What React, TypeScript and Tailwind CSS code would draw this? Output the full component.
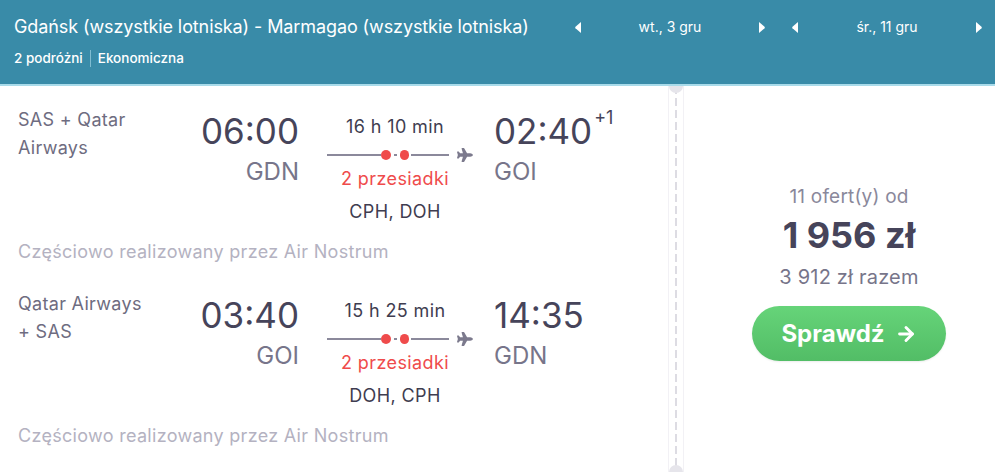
import { ArrowRight } from 'lucide-react'
import { FaPlane } from 'react-icons/fa'

type Leg = {
  airline: string[]
  depTime: string
  depCode: string
  duration: string
  stops: string
  via: string
  arrTime: string
  arrCode: string
  dayShift?: string
}

const legs: Leg[] = [
  {
    airline: ['SAS + Qatar', 'Airways'],
    depTime: '06:00',
    depCode: 'GDN',
    duration: '16 h 10 min',
    stops: '2 przesiadki',
    via: 'CPH, DOH',
    arrTime: '02:40',
    arrCode: 'GOI',
    dayShift: '+1',
  },
  {
    airline: ['Qatar Airways', '+ SAS'],
    depTime: '03:40',
    depCode: 'GOI',
    duration: '15 h 25 min',
    stops: '2 przesiadki',
    via: 'DOH, CPH',
    arrTime: '14:35',
    arrCode: 'GDN',
  },
]

function Triangle({ dir }: { dir: 'left' | 'right' }) {
  return (
    <svg width="8" height="13" viewBox="0 0 8 13" className="shrink-0">
      {dir === 'left' ? (
        <path d="M7 1 L7 12 L1.5 7.2 Q0.8 6.5 1.5 5.8 Z" fill="#fff" />
      ) : (
        <path d="M1 1 L1 12 L6.5 7.2 Q7.2 6.5 6.5 5.8 Z" fill="#fff" />
      )}
    </svg>
  )
}

function DatePicker({ label }: { label: string }) {
  return (
    <div className="flex items-center justify-between w-[192px]">
      <Triangle dir="left" />
      <span className="text-[14px] leading-[18px] text-white">{label}</span>
      <Triangle dir="right" />
    </div>
  )
}

function Route() {
  return (
    <div className="flex items-center h-[12px] w-[146px]">
      <div className="h-[2px] w-[54px] bg-[#8b899b]" />
      <div className="w-[10px] h-[10px] rounded-full bg-[#ef4b4b]" />
      <div className="h-[2px] w-[3px] mx-[3px] bg-[#8b899b]" />
      <div className="w-[10px] h-[10px] rounded-full bg-[#ef4b4b]" />
      <div className="h-[2px] w-[38px] ml-[2px] bg-[#8b899b]" />
      <FaPlane className="ml-[8px] text-[#7c7a8d]" size={16} />
    </div>
  )
}

function LegRow({ leg, last }: { leg: Leg; last?: boolean }) {
  return (
    <div className={last ? 'pt-[20px] pl-[18px]' : 'pt-[20px] pb-[6px] pl-[18px]'}>
      <div className="flex items-start">
        <div className="w-[170px] text-[18px] leading-[28px] tracking-[0.3px] text-[#6e6c80]">
          {leg.airline.map((l) => (
            <div key={l}>{l}</div>
          ))}
        </div>
        <div className="w-[111px] text-right pt-[5px]">
          <div className="text-[35px] leading-[40px] text-[#46445a]">{leg.depTime}</div>
          <div className="text-[24px] leading-[30px] mt-[6px] text-[#77758a]">{leg.depCode}</div>
        </div>
        <div className="ml-[28px] w-[146px] pt-[9px] text-[18px] leading-[24px] tracking-[0.4px]">
          <div className="w-[136px] text-center text-[#3f3d50]">{leg.duration}</div>
          <div className="mt-[10px]">
            <Route />
          </div>
          <div className="w-[136px] mt-[6px] text-center text-[#ef4b4b]">{leg.stops}</div>
          <div className="w-[136px] mt-[9px] text-center text-[#3f3d50]">{leg.via}</div>
        </div>
        <div className="ml-[21px] pt-[5px]">
          <div className="flex items-start">
            <span className="text-[35px] leading-[40px] text-[#46445a]">{leg.arrTime}</span>
            {leg.dayShift && (
              <span className="ml-[2px] -mt-[5px] text-[18px] leading-[24px] text-[#46445a]">{leg.dayShift}</span>
            )}
          </div>
          <div className="text-[24px] leading-[30px] mt-[6px] text-[#77758a]">{leg.arrCode}</div>
        </div>
      </div>
      <div className="mt-[16px] text-[18px] leading-[24px] tracking-[0.3px] text-[#b4b2c1]">
        Częściowo realizowany przez Air Nostrum
      </div>
    </div>
  )
}

export default function App() {
  return (
    <div className="w-[995px] h-[472px] overflow-hidden bg-white font-['Inter','Liberation_Sans',sans-serif]">
      {/* Header */}
      <header className="h-[86px] bg-[#398ba8] border-b-2 border-[#a9dbea] flex justify-between pl-[14px] pr-[12px]">
        <div className="pt-[14px]">
          <h1 className="text-[18px] leading-[26px] tracking-[-0.1px] text-white">
            Gdańsk (wszystkie lotniska) - Marmagao (wszystkie lotniska)
          </h1>
          <div className="mt-[9px] flex items-center text-[13.5px] leading-[18px] font-medium text-white">
            <span>2 podróżni</span>
            <span className="mx-[7px] h-[17px] w-px bg-[#7fbcd1]" />
            <span>Ekonomiczna</span>
          </div>
        </div>
        <div className="flex items-start gap-[25px] pt-[18px]">
          <DatePicker label="wt., 3 gru" />
          <DatePicker label="śr., 11 gru" />
        </div>
      </header>

      <div className="flex h-[386px]">
        {/* Flights */}
        <div className="w-[668px]">
          {legs.map((leg, i) => (
            <LegRow key={leg.depTime} leg={leg} last={i === legs.length - 1} />
          ))}
        </div>

        {/* Divider */}
        <div className="relative overflow-hidden w-[16px] border-x border-[#f2f1f5] flex justify-center">
          <div className="w-[2px] h-full bg-[repeating-linear-gradient(to_bottom,#dddce3_0_8px,transparent_8px_12px)]" />
          <div className="absolute -top-[7px] left-1/2 -translate-x-1/2 w-[14px] h-[14px] rounded-full bg-[#e6e5eb]" />
          <div className="absolute -bottom-[7px] left-1/2 -translate-x-1/2 w-[14px] h-[14px] rounded-full bg-[#e6e5eb]" />
        </div>

        {/* Price */}
        <div className="flex-1 pl-[19px] pt-[99px] flex flex-col items-center">
          <div className="text-[19px] leading-[24px] tracking-[0.2px] text-[#8a889b]">11 ofert(y) od</div>
          <div className="mt-[6px] text-[36px] leading-[40px] font-bold text-[#46445a]">1 956 zł</div>
          <div className="mt-[9px] text-[20px] leading-[26px] tracking-[0.2px] text-[#77758a]">3 912 zł razem</div>
          <button className="mt-[16px] w-[194px] h-[55px] rounded-full bg-gradient-to-b from-[#66d479] to-[#52bd66] text-white text-[24px] font-bold flex items-center justify-center gap-[10px] shadow-[0_1px_2px_rgba(0,0,0,0.08)]">
            Sprawdź
            <ArrowRight size={22} strokeWidth={3.2} />
          </button>
        </div>
      </div>
    </div>
  )
}
